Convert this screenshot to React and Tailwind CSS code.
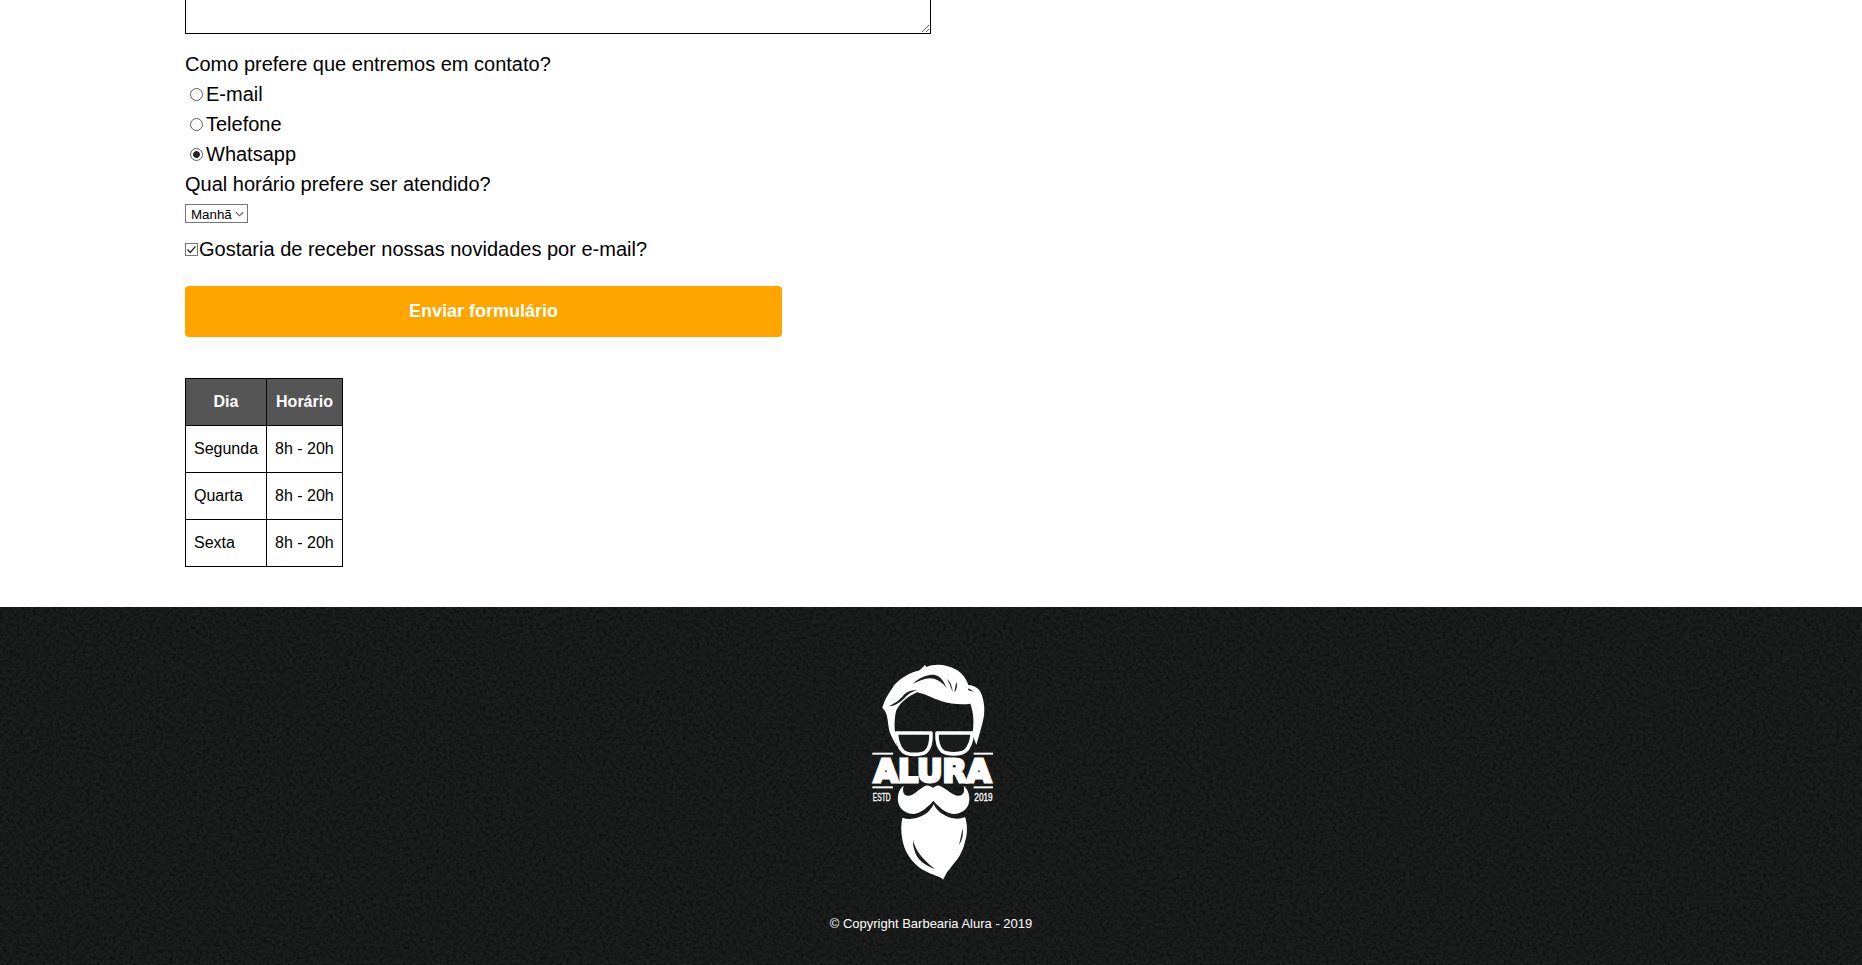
import React from "react";

const font = { fontFamily: '"Liberation Sans", Arial, sans-serif' };

function Logo() {
  return (
    <svg viewBox="0 0 480 720" className="block w-[160px] h-[240px]" aria-label="Barbearia Alura">
      {/* hair */}
      <path
        fill="#fff"
        d="M94 170 C100 148 112 128 130 102 C150 80 180 64 206 58 L222 42 L226 48 C252 36 288 40 312 54 C332 64 346 82 352 102 C370 104 384 112 390 126 C400 150 403 180 397 205 C391 230 384 255 376 282 L364 250 C370 215 368 185 358 158 C335 162 300 160 270 150 C245 142 220 128 198 124 C175 135 150 150 136 178 C128 205 130 245 138 286 C124 262 114 245 112 222 C110 205 108 188 100 178 Z"
      />
      <path fill="#1a1b1b" d="M186 98 C205 80 232 68 252 72 C270 76 278 92 288 112 C272 92 255 82 236 82 C220 83 204 90 186 98 Z" />
      <path fill="#1a1b1b" d="M112 166 C132 158 146 148 160 130 C172 120 184 116 198 118 C182 122 170 130 160 142 C146 156 130 166 112 166 Z" />
      <path fill="#1a1b1b" d="M288 84 C298 92 304 106 305 124 C300 108 295 96 288 84 Z" />
      <path fill="#1a1b1b" d="M316 92 C320 104 318 114 310 124 C312 112 314 102 316 92 Z" />
      <path fill="#1a1b1b" d="M352 112 L370 122 L352 118 Z" />
      {/* glasses */}
      <path
        fill="#1a1b1b"
        stroke="#fff"
        strokeWidth="11"
        strokeLinejoin="round"
        d="M136 246 L240 246 C241 272 237 292 224 303 C210 313 170 313 156 301 C144 290 138 270 136 246 Z"
      />
      <path
        fill="#1a1b1b"
        stroke="#fff"
        strokeWidth="11"
        strokeLinejoin="round"
        d="M258 246 L364 246 C362 270 356 290 342 301 C328 311 288 311 274 301 C262 290 257 270 258 246 Z"
      />
      {/* rules */}
      <rect x="64" y="305" width="62" height="6" fill="#fff" />
      <rect x="368" y="305" width="58" height="6" fill="#fff" />
      <rect x="64" y="406" width="62" height="6" fill="#fff" />
      <rect x="368" y="406" width="58" height="6" fill="#fff" />
      {/* wordmark */}
      <text
        x="68"
        y="392"
        fill="#fff"
        stroke="#fff"
        strokeWidth="9"
        strokeLinejoin="miter"
        fontFamily='"DejaVu Sans", sans-serif'
        fontWeight="700"
        fontSize="98"
        textLength="352"
        lengthAdjust="spacingAndGlyphs"
      >
        ALURA
      </text>
      <text x="65" y="449" fill="#fff" stroke="#fff" strokeWidth="1" fontFamily='"Liberation Sans", sans-serif' fontSize="30" textLength="54" lengthAdjust="spacingAndGlyphs">
        ESTD
      </text>
      <text x="370" y="449" fill="#fff" stroke="#fff" strokeWidth="1" fontFamily='"Liberation Sans", sans-serif' fontSize="30" textLength="55" lengthAdjust="spacingAndGlyphs">
        2019
      </text>
      {/* moustache */}
      <path
        fill="#fff"
        d="M158 404 C142 415 136 440 144 462 C154 484 180 494 200 486 C220 478 236 462 247 449 C258 462 274 478 294 486 C316 494 342 484 352 462 C360 440 352 415 338 404 C342 420 338 434 322 434 C304 434 286 412 266 404 C258 402 252 406 246 410 C240 406 232 402 224 404 C204 412 190 434 172 434 C156 434 154 420 158 404 Z"
      />
      {/* beard */}
      <path
        fill="#fff"
        d="M154 500 C176 508 204 502 222 490 C232 484 242 472 248 460 C254 472 264 484 276 490 C294 502 320 508 342 498 C350 520 350 550 342 572 C338 592 328 612 318 626 C306 640 296 654 288 664 L276 686 C268 676 250 674 230 664 C206 654 184 634 170 610 C154 582 146 540 154 500 Z"
      />
      <path fill="#1a1b1b" d="M186 566 C190 590 208 620 252 654 C220 642 196 624 190 596 C186 586 186 576 186 566 Z" />
      <path fill="#1a1b1b" d="M334 532 C338 552 334 566 324 582 C328 566 332 550 334 532 Z" />
    </svg>
  );
}

function Radio({ label, checked }) {
  return (
    <label className="flex h-[30px] items-center text-[20px]">
      <input
        type="radio"
        name="contato"
        defaultChecked={checked}
        className="ml-[5px] mr-[3px] h-[13px] w-[13px] appearance-none rounded-full border border-[#5f5f5f] bg-white checked:bg-[radial-gradient(circle,#222222_3px,#ffffff_3.8px)]"
      />
      {label}
    </label>
  );
}

const rows = ["Segunda", "Quarta", "Sexta"];

export default function App() {
  return (
    <div className="h-[965px] overflow-hidden bg-white text-black" style={font}>
      <main className="pl-[185px] pb-[40px]">
        <textarea className="-mt-[66px] block h-[100px] w-[746px] border border-black" defaultValue="" />
        <p className="mt-[15px] flex h-[30px] items-center text-[20px]">Como prefere que entremos em contato?</p>
        <Radio label="E-mail" />
        <Radio label="Telefone" />
        <Radio label="Whatsapp" checked />
        <p className="flex h-[30px] items-center text-[20px]">Qual horário prefere ser atendido?</p>
        <div className="relative mt-[5px] h-[19px] w-[63px]">
          <select className="block h-[19px] w-[63px] appearance-none border border-[#767676] bg-white pl-[5px] text-[13.33px]" defaultValue="Manhã">
            <option>Manhã</option>
          </select>
          <svg viewBox="0 0 10 6" className="pointer-events-none absolute right-[4px] top-[7px] h-[6px] w-[9px]" fill="none" stroke="#555555" strokeWidth="1.2">
            <path d="M1 1 L5 5 L9 1" />
          </svg>
        </div>
        <label className="relative mt-[11px] flex h-[30px] items-center text-[20px]">
          <input type="checkbox" defaultChecked className="m-0 mr-[1px] h-[13px] w-[13px] appearance-none border border-[#767676] bg-white" />
          <svg viewBox="0 0 13 13" className="pointer-events-none absolute left-0 top-[9px] h-[13px] w-[13px]" fill="none" stroke="#222222" strokeWidth="1.3">
            <path d="M2.5 6.5 L5.3 9.5 L10.5 3.3" />
          </svg>
          Gostaria de receber nossas novidades por e-mail?
        </label>
        <button className="mt-[22px] block h-[51px] w-[597px] rounded-[4px] bg-[#ffa500] text-[18px] font-bold text-white">
          Enviar formulário
        </button>
        <table className="mt-[41px] w-[158px] table-fixed border-collapse text-[16px]">
          <thead>
            <tr className="h-[47px] bg-[#555555] font-bold text-white">
              <th className="w-[81px] border border-black">Dia</th>
              <th className="w-[76px] border border-black">Horário</th>
            </tr>
          </thead>
          <tbody>
            {rows.map((d) => (
              <tr key={d} className="h-[47px]">
                <td className="border border-black pl-[8px]">{d}</td>
                <td className="border border-black pl-[8px]">8h - 20h</td>
              </tr>
            ))}
          </tbody>
        </table>
      </main>
      <footer className="relative h-[359px] overflow-hidden bg-[#1d1e1e] text-white">
        <svg className="absolute inset-0 h-full w-full" aria-hidden="true">
          <filter id="grain" x="0" y="0" width="100%" height="100%">
            <feTurbulence type="fractalNoise" baseFrequency="0.3" numOctaves="3" seed="7" />
            <feColorMatrix values="0 0 0 0 0  0 0 0 0 0  0 0 0 0 0  2.2 0 0 0 -0.85" />
          </filter>
          <rect width="100%" height="100%" filter="url(#grain)" opacity="0.5" />
        </svg>
        <div className="relative flex flex-col items-center pt-[44px]">
          <Logo />
          <p className="mt-[23px] text-[13px]">© Copyright Barbearia Alura - 2019</p>
        </div>
      </footer>
    </div>
  );
}
